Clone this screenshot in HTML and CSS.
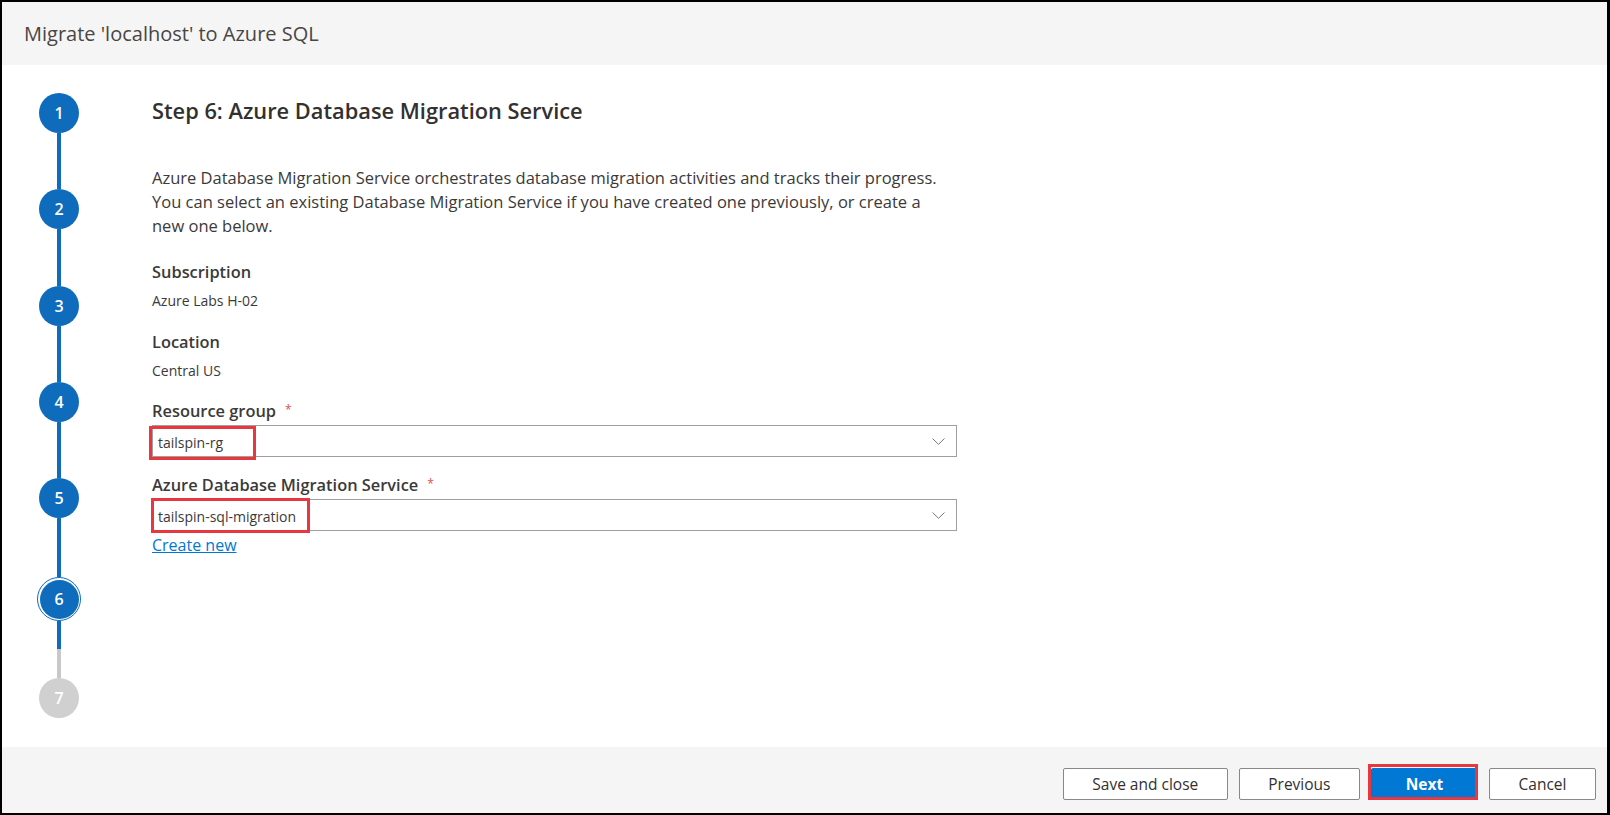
FILE: index.html
```html
<!DOCTYPE html>
<html lang="en">
<head>
<meta charset="utf-8">
<title>Migrate 'localhost' to Azure SQL</title>
<link rel="stylesheet" href="styles.css">
</head>
<body>
<div class="frame">
  <header class="titlebar">
    <span class="title">Migrate 'localhost' to Azure SQL</span>
  </header>
  <main class="wizard">
    <nav class="stepper">
      <div class="step done">1</div>
      <div class="conn"></div>
      <div class="step done">2</div>
      <div class="conn"></div>
      <div class="step done">3</div>
      <div class="conn"></div>
      <div class="step done">4</div>
      <div class="conn"></div>
      <div class="step done">5</div>
      <div class="conn conn-before-current"></div>
      <div class="step current">6</div>
      <div class="conn conn-split"></div>
      <div class="step todo">7</div>
    </nav>
    <section class="content">
      <h1 class="heading">Step 6: Azure Database Migration Service</h1>
      <p class="intro">Azure Database Migration Service orchestrates database migration activities and tracks their progress. You can select an existing Database Migration Service if you have created one previously, or create a new one below.</p>

      <div class="field field-sub">
        <div class="label">Subscription</div>
        <div class="value">Azure Labs H-02</div>
      </div>

      <div class="field field-loc">
        <div class="label">Location</div>
        <div class="value">Central US</div>
      </div>

      <div class="field field-rg">
        <div class="label">Resource group<span class="req">*</span></div>
        <div class="dropdown">
          <span class="ddval">tailspin-rg</span>
          <svg class="chev" width="13" height="7" viewBox="0 0 13 7"><path d="M0.5 0.5 L6.5 6.3 L12.5 0.5" fill="none" stroke="#7a7876" stroke-width="1"/></svg>
          <span class="hl hl-rg"></span>
        </div>
      </div>

      <div class="field field-dms">
        <div class="label">Azure Database Migration Service<span class="req">*</span></div>
        <div class="dropdown">
          <span class="ddval">tailspin-sql-migration</span>
          <svg class="chev" width="13" height="7" viewBox="0 0 13 7"><path d="M0.5 0.5 L6.5 6.3 L12.5 0.5" fill="none" stroke="#7a7876" stroke-width="1"/></svg>
          <span class="hl hl-dms"></span>
        </div>
        <a class="link" href="#">Create new</a>
      </div>
    </section>
  </main>
  <footer class="actions">
    <button class="btn">Save and close</button>
    <button class="btn">Previous</button>
    <button class="btn btn-primary">Next<span class="hl hl-next"></span></button>
    <button class="btn">Cancel</button>
  </footer>
</div>
</body>
</html>
```

FILE: styles.css
```css
* { box-sizing: border-box; }

html, body {
  margin: 0;
  padding: 0;
  background: #ffffff;
}

body {
  font-family: "Open Sans", "Noto Sans", sans-serif;
  color: #323130;
}

.frame {
  width: 1610px;
  height: 815px;
  border-style: solid;
  border-color: #000000;
  border-width: 2px 3px 2px 2px;
  display: flex;
  flex-direction: column;
  background: #ffffff;
}

.titlebar {
  height: 63px;
  flex: none;
  background: #f5f5f5;
  display: flex;
  align-items: center;
  padding-left: 22px;
}

.title {
  font-size: 20px;
  color: #484644;
  font-weight: 400;
}

.wizard {
  flex: 1;
  display: flex;
  min-height: 0;
}

.stepper {
  width: 150px;
  flex: none;
  display: flex;
  flex-direction: column;
  align-items: flex-start;
  padding-top: 28px;
  padding-left: 35px;
}

.step {
  width: 40px;
  height: 40px;
  border-radius: 50%;
  margin-left: 2px;
  display: flex;
  align-items: center;
  justify-content: center;
  color: #ffffff;
  font-size: 16px;
  font-weight: 600;
  flex: none;
}

.step.done {
  background: #0f6cbd;
}

.step.current {
  width: 44px;
  height: 44px;
  margin-left: 0;
  border: 1.5px solid #0f6cbd;
  padding: 1.5px;
  background: #0f6cbd;
  background-clip: content-box;
}

.step.todo {
  background: #d0d0d0;
}

.conn {
  width: 4px;
  height: 56.25px;
  margin-left: 20px;
  background: #0f6cbd;
  flex: none;
}

.conn-before-current {
  height: 59px;
}

.conn-split {
  height: 57px;
  background: linear-gradient(to bottom, #0f6cbd 0, #0f6cbd 28px, #c8c8c8 28px, #c8c8c8 100%);
}

.content {
  flex: 1;
  padding-top: 32px;
}

.heading {
  margin: 0;
  font-size: 21.8px;
  line-height: 28px;
  font-weight: 600;
  color: #323130;
}

.intro {
  margin: 41px 0 0 0;
  max-width: 796px;
  font-size: 16.5px;
  line-height: 24px;
  color: #3b3a39;
}

.field-sub { margin-top: 23px; }
.field-loc { margin-top: 20px; }
.field-rg { margin-top: 18px; }
.field-dms { margin-top: 16px; }

.label {
  font-size: 16.4px;
  line-height: 22px;
  font-weight: 600;
  color: #3b3a39;
}

.req {
  color: #e05050;
  font-size: 12px;
  font-weight: 400;
  margin-left: 9px;
  vertical-align: 3px;
}

.value {
  margin-top: 8px;
  font-size: 14px;
  line-height: 20px;
  color: #3b3a39;
}

.dropdown {
  position: relative;
  margin-top: 3px;
  width: 805px;
  height: 32px;
  border: 1px solid #a19f9d;
  display: flex;
  align-items: center;
  justify-content: space-between;
  padding: 0 11px 0 5px;
  background: #ffffff;
}

.ddval {
  font-size: 14px;
  line-height: 20px;
  padding-top: 3px;
  color: #3b3a39;
}

.chev {
  display: block;
  flex: none;
}

.hl {
  position: absolute;
  border: 3px solid #e8373f;
  pointer-events: none;
}

.hl-rg {
  left: -4px;
  top: 0;
  width: 107px;
  height: 34px;
}

.hl-dms {
  left: -2px;
  top: -2px;
  width: 159px;
  height: 35px;
}

.link {
  display: block;
  margin-top: 3px;
  font-size: 16px;
  line-height: 22px;
  color: #0078d4;
  text-decoration: underline;
  width: max-content;
}

.actions {
  height: 66px;
  flex: none;
  background: #f5f5f5;
  display: flex;
  justify-content: flex-end;
  align-items: flex-start;
  gap: 11px;
  padding-top: 21px;
  padding-right: 11px;
}

.btn {
  position: relative;
  height: 32px;
  min-width: 107px;
  padding: 0 28.5px;
  border: 1px solid #8a8886;
  border-radius: 2px;
  background: #ffffff;
  font-family: "Open Sans", "Noto Sans", sans-serif;
  font-size: 15.5px;
  color: #323130;
  line-height: 30px;
}

.btn-primary {
  background: #0078d4;
  border-color: #0078d4;
  color: #ffffff;
  font-weight: 700;
}

.hl-next {
  left: -4px;
  top: -5px;
  width: 110px;
  height: 36px;
}
```
